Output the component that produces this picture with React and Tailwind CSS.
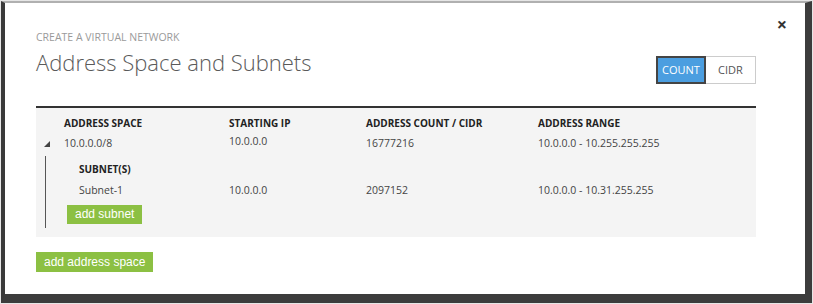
import React, { useState } from 'react';

const font = { fontFamily: '"Open Sans", "Noto Sans", sans-serif' };

const ranges = [
  { space: '10.0.0.0/8', start: '10.0.0.0', count: '16777216', range: '10.0.0.0 - 10.255.255.255' },
];

const subnets = [
  { name: 'Subnet-1', start: '10.0.0.0', count: '2097152', range: '10.0.0.0 - 10.31.255.255' },
];

const App = () => {
  const [mode, setMode] = useState('count');

  return (
    <div className="w-[813px] h-[304px] bg-[#e6e6e6] p-[1px]" style={font}>
      <div className="relative h-full bg-white border-l-[4px] border-l-[#3a3a3a] border-t-[2px] border-t-[#b0b0b0] border-r-[7px] border-r-[#3c3c3c] border-b-[9px] border-b-[#3c3c3c] pl-[31px] pr-[49px] pt-[27px]">
        {/* close */}
        <button className="absolute top-[12px] right-[18px] text-[18px] leading-none font-bold text-[#333]">×</button>

        {/* header */}
        <div className="flex items-start justify-between">
          <div>
            <div className="text-[10.5px] leading-[14px] text-[#9a9a9a]">CREATE A VIRTUAL NETWORK</div>
            <h1 className="mt-[3px] text-[22px] leading-[30px] font-light text-[#5a5a5a]">Address Space and Subnets</h1>
          </div>
          <div className="flex mt-[26px] text-[11px]">
            <button
              onClick={() => setMode('count')}
              className={mode === 'count'
                ? 'w-[50px] h-[28px] bg-[#4b9ee0] border-2 border-[#444] text-white'
                : 'w-[50px] h-[28px] bg-white border border-[#ccc] text-[#555]'}
            >
              COUNT
            </button>
            <button
              onClick={() => setMode('cidr')}
              className={mode === 'cidr'
                ? 'w-[50px] h-[28px] bg-[#4b9ee0] border-2 border-[#444] text-white'
                : 'w-[50px] h-[28px] bg-white border border-[#ccc] border-l-0 text-[#555]'}
            >
              CIDR
            </button>
          </div>
        </div>

        {/* table */}
        <div className="mt-[22px] border-t-[2px] border-[#333] bg-[#f4f4f4] pb-[9px] text-[10.5px] text-[#444]">
          <div className="grid grid-cols-[28px_165px_137px_172px_1fr] pt-[8px] font-bold text-[10px] text-[#222] leading-[14px]">
            <div></div>
            <div>ADDRESS SPACE</div>
            <div>STARTING IP</div>
            <div>ADDRESS COUNT / CIDR</div>
            <div>ADDRESS RANGE</div>
          </div>

          {ranges.map((r) => (
            <div key={r.space}>
              <div className="grid grid-cols-[28px_165px_137px_172px_1fr] mt-[6px] leading-[14px]">
                <div className="pl-[8px]">
                  <svg width="6" height="6" viewBox="0 0 6 6" className="mt-[5px]">
                    <path d="M6 0V6H0Z" fill="#444" />
                  </svg>
                </div>
                <div>{r.space}</div>
                <div className="-mt-[2px]">{r.start}</div>
                <div>{r.count}</div>
                <div>{r.range}</div>
              </div>

              <div className="ml-[9px] mt-[6px] border-l border-[#555] pl-[21px] pt-[6px] pb-[4px]">
                <div className="pl-[12px] font-bold text-[10px] text-[#222] leading-[14px]">SUBNET(S)</div>
                {subnets.map((s) => (
                  <div key={s.name} className="grid grid-cols-[162px_137px_172px_1fr] mt-[7px] leading-[14px]">
                    <div className="pl-[12px]">{s.name}</div>
                    <div>{s.start}</div>
                    <div>{s.count}</div>
                    <div>{s.range}</div>
                  </div>
                ))}
                <button className="mt-[8px] h-[19px] px-[8px] bg-[#8cc043] text-white text-[12px] leading-[19px]" style={{ fontFamily: '"Liberation Sans", Arial, sans-serif' }}>
                  add subnet
                </button>
              </div>
            </div>
          ))}
        </div>

        <button className="mt-[15px] h-[20px] px-[8px] bg-[#8cc043] text-white text-[12px] leading-[20px]" style={{ fontFamily: '"Liberation Sans", Arial, sans-serif' }}>
          add address space
        </button>
      </div>
    </div>
  );
};

export default App;
